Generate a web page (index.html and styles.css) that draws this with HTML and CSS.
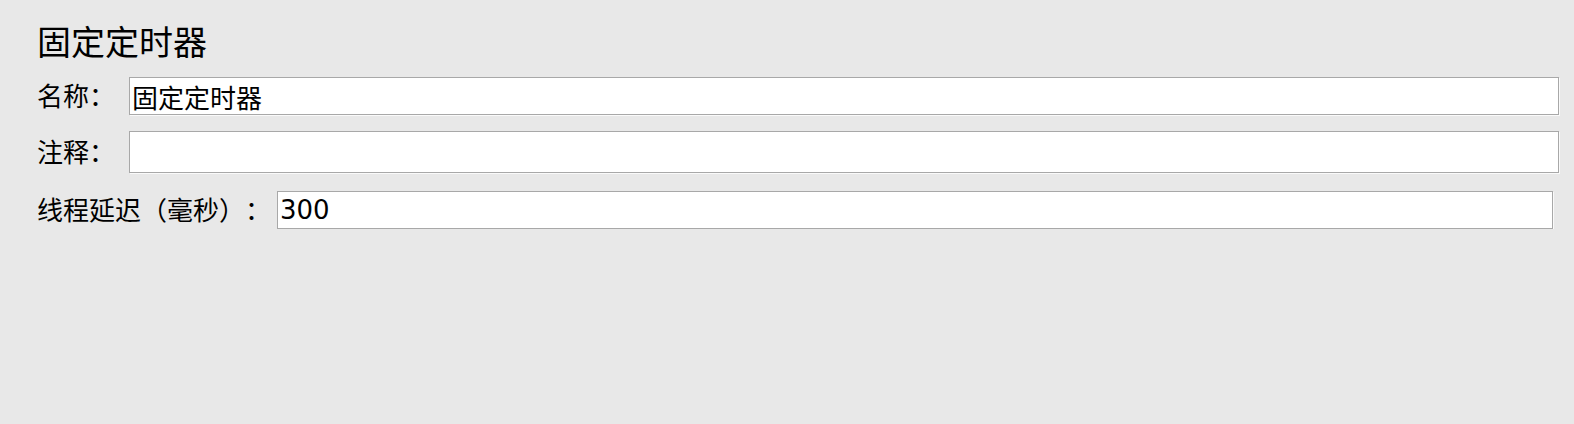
FILE: index.html
```html
<!DOCTYPE html>
<html lang="zh-CN">
<head>
<meta charset="utf-8">
<title>固定定时器</title>
<link rel="stylesheet" href="styles.css">
</head>
<body>
<div class="panel">
  <h1 class="title">固定定时器</h1>
  <div class="row row-name">
    <label class="label label-short" for="name">名称：</label>
    <input class="field" id="name" type="text" value="固定定时器">
  </div>
  <div class="row row-comment">
    <label class="label label-short" for="comment">注释：</label>
    <textarea class="field field-area" id="comment"></textarea>
  </div>
  <div class="row row-delay">
    <label class="label label-long" for="delay">线程延迟（毫秒）：</label>
    <input class="field" id="delay" type="text" value="300">
  </div>
</div>
</body>
</html>
```

FILE: styles.css
```css
html, body {
  margin: 0;
  padding: 0;
  background: #e8e8e8;
}

body {
  font-family: "DejaVu Sans", "Noto Sans CJK SC", sans-serif;
  color: #000;
  text-spacing-trim: space-all;
}

.panel {
  display: flex;
  flex-direction: column;
  padding: 23px 15px 0 37px;
}

.title {
  margin: 0;
  font-size: 34px;
  font-weight: normal;
  line-height: 40px;
  height: 40px;
}

.row {
  display: flex;
  align-items: center;
}

.row-name {
  margin-top: 14px;
}

.row-comment {
  margin-top: 16px;
}

.row-delay {
  margin-top: 18px;
  margin-right: 6px;
}

.label {
  flex: none;
  font-size: 26px;
  line-height: 36px;
  padding-top: 2px;
  white-space: nowrap;
  text-spacing-trim: space-all;
}

.label-short {
  width: 92px;
}

.label-long {
  width: 240px;
}

.field {
  flex: 1;
  min-width: 0;
  box-sizing: border-box;
  height: 38px;
  margin: 0;
  padding: 0 2px;
  border: 1px solid #a8a8a8;
  border-radius: 0;
  background: #fff;
  box-shadow: 1px 1px 0 #fafafa;
  font-family: "DejaVu Sans", "Noto Sans CJK SC", sans-serif;
  font-size: 26px;
  line-height: 36px;
  color: #000;
  outline: none;
}

.field-area {
  height: 42px;
  resize: none;
  overflow: hidden;
  display: block;
}
```
